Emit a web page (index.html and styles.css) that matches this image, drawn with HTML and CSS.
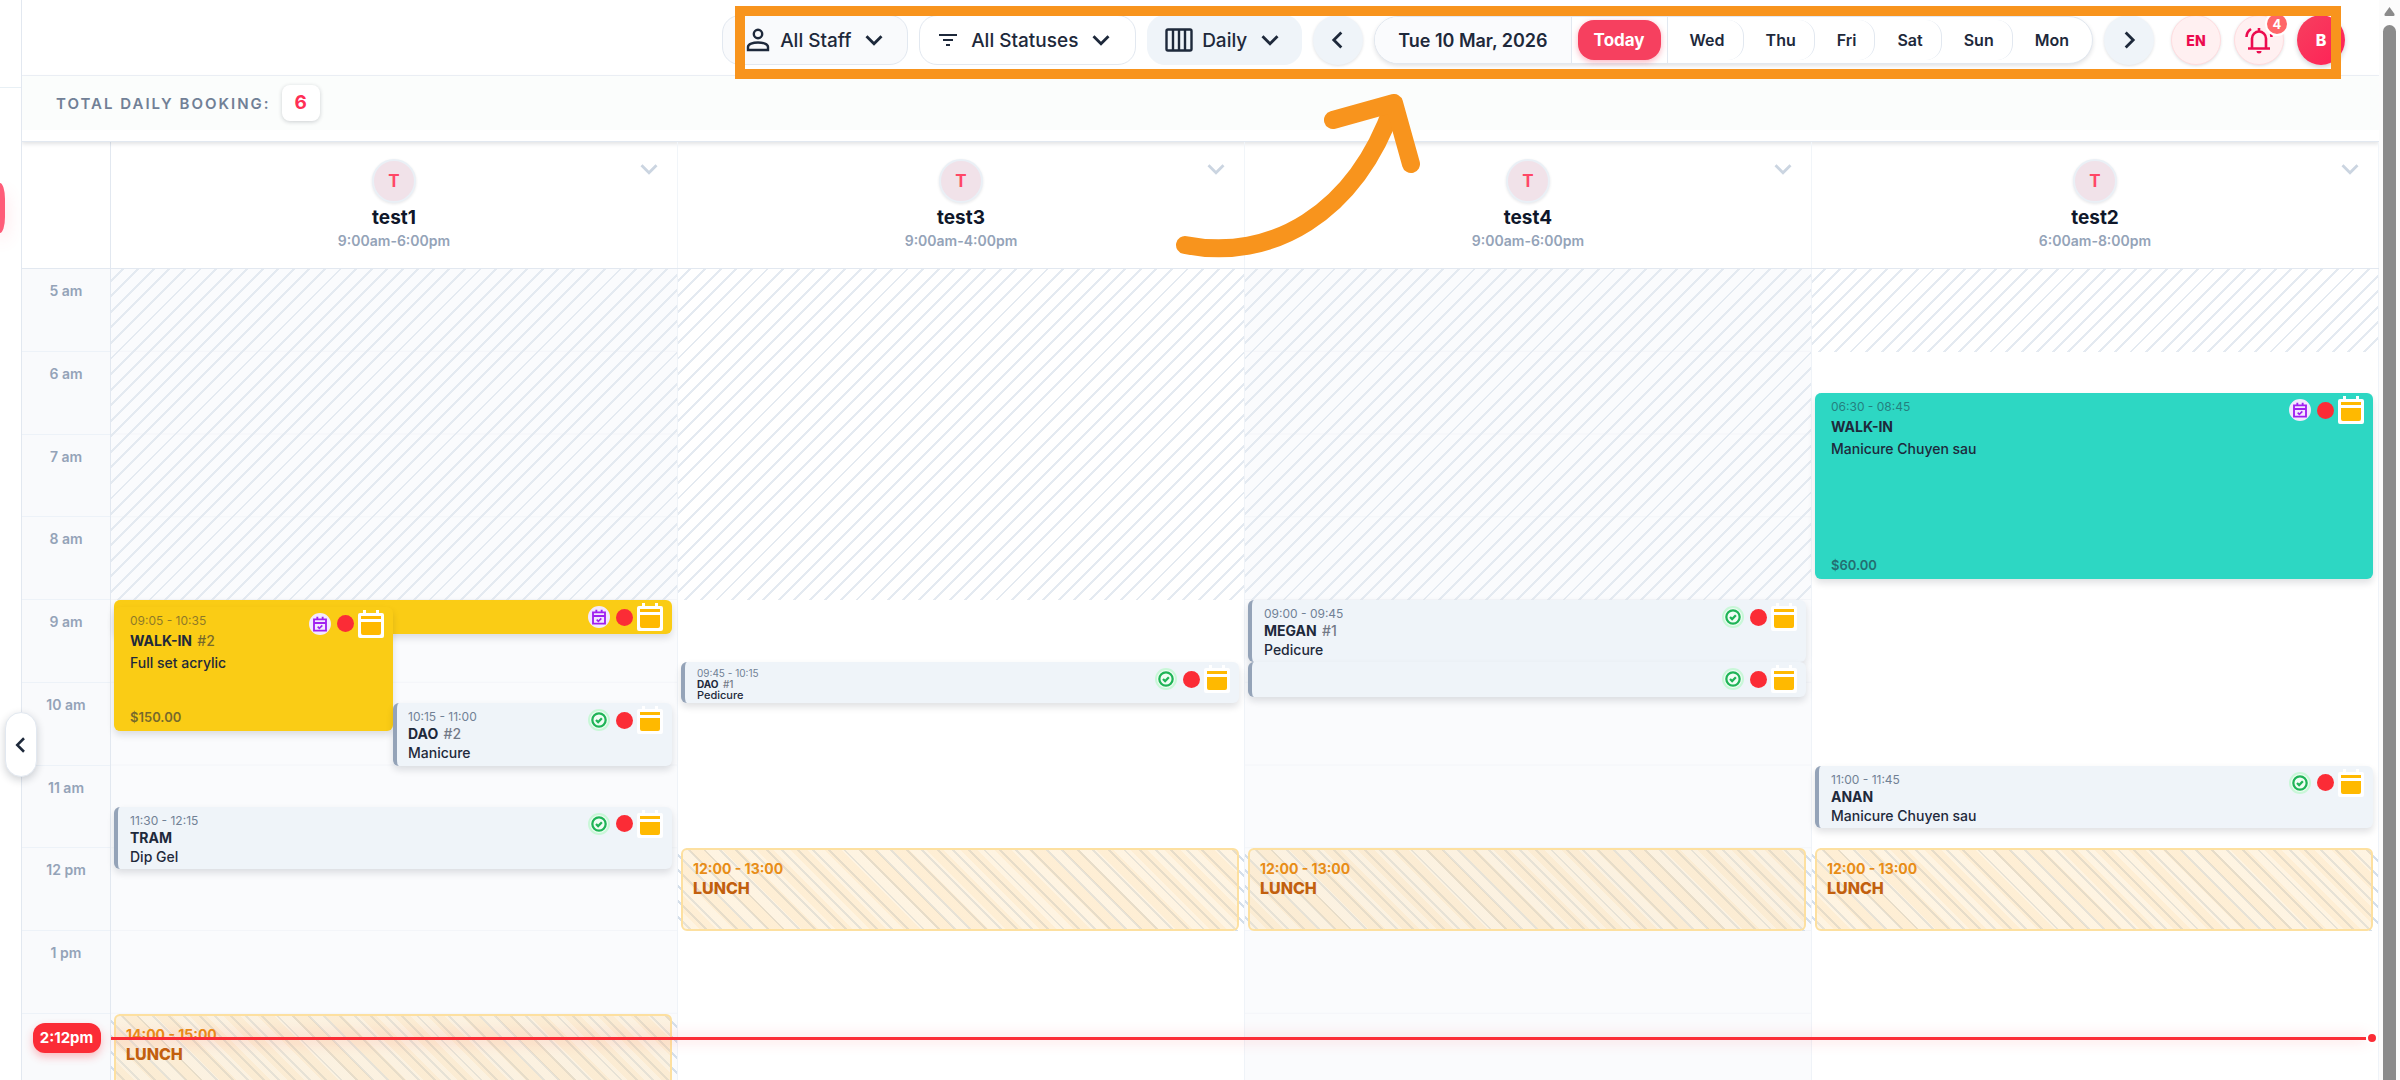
FILE: index.html
```html
<!DOCTYPE html>
<html lang="en">
<head>
  <meta charset="UTF-8" />
  <meta name="viewport" content="width=device-width, initial-scale=1.0" />
  <title>Daily Bookings</title>
  <link rel="stylesheet" href="styles.css">
</head>
<body>

  <!-- Shared icons -->
  <svg class="sprite" aria-hidden="true">
    <symbol id="i-down" viewBox="0 0 24 24"><path d="M3 7.500l9 9 9-9" fill="none" stroke="currentColor" stroke-width="3.400"/></symbol>
    <symbol id="i-left" viewBox="0 0 24 24"><path d="M16 3l-9 9 9 9" fill="none" stroke="currentColor" stroke-width="3.400"/></symbol>
    <symbol id="i-right" viewBox="0 0 24 24"><path d="M8 3l9 9-9 9" fill="none" stroke="currentColor" stroke-width="3.400"/></symbol>
    <symbol id="i-done" viewBox="0 0 24 24">
      <circle cx="12" cy="12" r="10" fill="none" stroke="currentColor" stroke-width="3.400"/>
      <path d="M7.500 12l3.200 3.200 5.600-5.800" fill="none" stroke="currentColor" stroke-width="3.400"/>
    </symbol>
    <symbol id="i-booked" viewBox="0 0 24 24">
      <path d="M3 5h18v17H3zM3 10.500h18M8 1v5M16 1v5" fill="none" stroke="currentColor" stroke-width="2.800"/>
      <path d="M8.500 16l2.500 2.500 4.500-4.500" fill="none" stroke="currentColor" stroke-width="2.400"/>
    </symbol>
    <symbol id="i-calendar" viewBox="0 0 26 28">
      <path d="M5 0h3v3h10V0h3v3h3a2 2 0 0 1 2 2v21a2 2 0 0 1-2 2H2a2 2 0 0 1-2-2V5a2 2 0 0 1 2-2h3z" fill="#fff"/>
      <path d="M3 6h20v3H3zM3 12h20v11a2 2 0 0 1-2 2H5a2 2 0 0 1-2-2z" fill="#ffb900"/>
    </symbol>
  </svg>

  <aside class="sidebar">
    <div class="sidebar-top"></div>
    <div class="sidebar-active"></div>
    <button class="collapse" aria-label="Collapse sidebar"><svg><use href="#i-left"/></svg></button>
  </aside>

  <main class="main">
    <header class="toolbar">
      <label class="picker picker-staff">
        <svg class="icon-user" viewBox="0 0 24 24" fill="none" stroke="currentColor" stroke-width="2.400"><circle cx="12" cy="6" r="4.200"/><path d="M2 22v-3c0-3 5-4.500 10-4.500s10 1.500 10 4.500v3z"/></svg>
        <select aria-label="Staff"><option>All Staff</option></select>
        <svg class="chev"><use href="#i-down"/></svg>
      </label>
      <label class="picker picker-status">
        <svg class="icon-filter" viewBox="0 0 18 14" stroke="currentColor" stroke-width="2"><path d="M0 2h18M4 7h10M7 12h4"/></svg>
        <select aria-label="Status"><option>All Statuses</option></select>
        <svg class="chev"><use href="#i-down"/></svg>
      </label>
      <label class="picker picker-view">
        <svg class="icon-cols" viewBox="0 0 28 24" fill="none" stroke="currentColor" stroke-width="2.400"><rect x="1.500" y="1.500" width="25" height="21" rx="1.500"/><path d="M8 2v20M14 2v20M20 2v20"/></svg>
        <select aria-label="View"><option>Daily</option></select>
        <svg class="chev"><use href="#i-down"/></svg>
      </label>
      <button class="round" aria-label="Previous day"><svg><use href="#i-left"/></svg></button>
      <div class="days">
        <button class="date">Tue 10 Mar, 2026</button>
        <div class="today-cell"><button class="today">Today</button></div>
        <button class="day">Wed</button>
        <button class="day">Thu</button>
        <button class="day">Fri</button>
        <button class="day">Sat</button>
        <button class="day">Sun</button>
        <button class="day">Mon</button>
      </div>
      <button class="round" aria-label="Next day"><svg><use href="#i-right"/></svg></button>
      <div class="account">
        <button class="lang">EN</button>
        <button class="bell" aria-label="Notifications">
          <svg viewBox="0 0 28 28" fill="none" stroke="currentColor" stroke-width="2.600"><path d="M3 22.500h22M7 22V12.500a7 7 0 0 1 14 0V22M14 6V2"/><path d="M1.500 11c0-3 1.500-6 4.500-8M26.500 11c0-1-.2-2-.5-3"/><path d="M11.500 25h5a2.500 2.500 0 0 1-5 0z" fill="currentColor" stroke="none"/></svg>
          <span class="count">4</span>
        </button>
        <button class="avatar">B</button>
      </div>
    </header>

    <section class="summary">
      <div class="summary-row">
        <span class="summary-label">TOTAL DAILY BOOKING:</span>
        <span class="summary-count">6</span>
      </div>
    </section>

    <section class="staff-row">
      <div class="corner"></div>
      <div class="staff">
        <div class="initial">T</div><div class="name">test1</div><div class="hours">9:00am-6:00pm</div>
        <button class="staff-menu" aria-label="test1 options"><svg><use href="#i-down"/></svg></button>
      </div>
      <div class="staff">
        <div class="initial">T</div><div class="name">test3</div><div class="hours">9:00am-4:00pm</div>
        <button class="staff-menu" aria-label="test3 options"><svg><use href="#i-down"/></svg></button>
      </div>
      <div class="staff">
        <div class="initial">T</div><div class="name">test4</div><div class="hours">9:00am-6:00pm</div>
        <button class="staff-menu" aria-label="test4 options"><svg><use href="#i-down"/></svg></button>
      </div>
      <div class="staff">
        <div class="initial">T</div><div class="name">test2</div><div class="hours">6:00am-8:00pm</div>
        <button class="staff-menu" aria-label="test2 options"><svg><use href="#i-down"/></svg></button>
      </div>
    </section>

    <!-- Each column is a grid of 5 minute rows starting at 5 am -->
    <section class="calendar">
      <div class="times">
        <div>5 am</div><div>6 am</div><div>7 am</div><div>8 am</div><div>9 am</div><div>10 am</div>
        <div>11 am</div><div>12 pm</div><div>1 pm</div><div></div><div></div><div></div>
      </div>

      <div class="column">
        <div class="closed" style="grid-row: 1 / 49"></div>
        <article class="event yellow" style="grid-row: 49 / 54">
          <div class="status"><span class="badge booked"><svg><use href="#i-booked"/></svg></span><span class="dot"></span><svg class="cal"><use href="#i-calendar"/></svg></div>
        </article>
        <article class="event yellow left roomy" style="grid-row: 50 / 68">
          <div class="info"><div class="time">09:05 - 10:35</div><div class="client">WALK-IN <span>#2</span></div><div class="service">Full set acrylic</div><div class="price">$150.00</div></div>
          <div class="status"><span class="badge booked"><svg><use href="#i-booked"/></svg></span><span class="dot"></span><svg class="cal"><use href="#i-calendar"/></svg></div>
        </article>
        <article class="event right" style="grid-row: 64 / 73">
          <div class="info"><div class="time">10:15 - 11:00</div><div class="client">DAO <span>#2</span></div><div class="service">Manicure</div></div>
          <div class="status"><span class="badge"><svg><use href="#i-done"/></svg></span><span class="dot"></span><svg class="cal"><use href="#i-calendar"/></svg></div>
        </article>
        <article class="event" style="grid-row: 79 / 88">
          <div class="info"><div class="time">11:30 - 12:15</div><div class="client">TRAM</div><div class="service">Dip Gel</div></div>
          <div class="status"><span class="badge"><svg><use href="#i-done"/></svg></span><span class="dot"></span><svg class="cal"><use href="#i-calendar"/></svg></div>
        </article>
        <div class="break" style="grid-row: 109 / 121"></div>
        <article class="lunch" style="grid-row: 109 / 121"><div class="lunch-time">14:00 - 15:00</div><div class="lunch-name">LUNCH</div></article>
      </div>

      <div class="column">
        <div class="closed" style="grid-row: 1 / 49"></div>
        <article class="event tiny" style="grid-row: 58 / 64">
          <div class="info"><div class="time">09:45 - 10:15</div><div class="client">DAO <span>#1</span></div><div class="service">Pedicure</div></div>
          <div class="status"><span class="badge"><svg><use href="#i-done"/></svg></span><span class="dot"></span><svg class="cal"><use href="#i-calendar"/></svg></div>
        </article>
        <div class="break" style="grid-row: 85 / 97"></div>
        <article class="lunch" style="grid-row: 85 / 97"><div class="lunch-time">12:00 - 13:00</div><div class="lunch-name">LUNCH</div></article>
      </div>

      <div class="column">
        <div class="closed" style="grid-row: 1 / 49"></div>
        <article class="event" style="grid-row: 49 / 58">
          <div class="info"><div class="time">09:00 - 09:45</div><div class="client">MEGAN <span>#1</span></div><div class="service">Pedicure</div></div>
          <div class="status"><span class="badge"><svg><use href="#i-done"/></svg></span><span class="dot"></span><svg class="cal"><use href="#i-calendar"/></svg></div>
        </article>
        <article class="event" style="grid-row: 58 / 63">
          <div class="status"><span class="badge"><svg><use href="#i-done"/></svg></span><span class="dot"></span><svg class="cal"><use href="#i-calendar"/></svg></div>
        </article>
        <div class="break" style="grid-row: 85 / 97"></div>
        <article class="lunch" style="grid-row: 85 / 97"><div class="lunch-time">12:00 - 13:00</div><div class="lunch-name">LUNCH</div></article>
      </div>

      <div class="column">
        <div class="closed" style="grid-row: 1 / 13"></div>
        <article class="event teal roomy" style="grid-row: 19 / 46">
          <div class="info"><div class="time">06:30 - 08:45</div><div class="client">WALK-IN</div><div class="service">Manicure Chuyen sau</div><div class="price">$60.00</div></div>
          <div class="status"><span class="badge booked"><svg><use href="#i-booked"/></svg></span><span class="dot"></span><svg class="cal"><use href="#i-calendar"/></svg></div>
        </article>
        <article class="event" style="grid-row: 73 / 82">
          <div class="info"><div class="time">11:00 - 11:45</div><div class="client">ANAN</div><div class="service">Manicure Chuyen sau</div></div>
          <div class="status"><span class="badge"><svg><use href="#i-done"/></svg></span><span class="dot"></span><svg class="cal"><use href="#i-calendar"/></svg></div>
        </article>
        <div class="break" style="grid-row: 85 / 97"></div>
        <article class="lunch" style="grid-row: 85 / 97"><div class="lunch-time">12:00 - 13:00</div><div class="lunch-name">LUNCH</div></article>
      </div>

      <!-- Current time marker -->
      <div class="now">
        <div class="now-cell"><span class="now-label">2:12pm</span></div>
        <div class="now-line"></div>
        <div class="now-dot"></div>
      </div>
    </section>
  </main>

  <div class="scrollbar">
    <svg viewBox="0 0 12 9"><path d="M6 0l5 7q.500 2-1 2H2Q.500 9 1 7z" fill="currentColor"/></svg>
    <div class="thumb"></div>
  </div>

  <!-- Tutorial highlight -->
  <div class="highlight"></div>
  <svg class="arrow" viewBox="0 0 250 170" fill="none" stroke="currentColor" stroke-width="18" stroke-linecap="round" stroke-linejoin="round">
    <path d="M10 151C96 168 180 120 218 12"/>
    <path d="M158 26L219 9L236 70"/>
  </svg>

</body>
</html>
```
FILE: styles.css
```css
:root {
  --accent: #f6405f;
  --red: #fb2c36;
  --ink: #1e293b;
  --muted: #94a3b8;
  --line: #e2e8f0;
  --soft: #eff4f9;
  --mark: #f8941d;
}

* {
  margin: 0;
  padding: 0;
  box-sizing: border-box;
}

body {
  position: relative;
  display: flex;
  height: 100vh;
  overflow: hidden;
  background: #fff;
  color: var(--ink);
  font-family: Inter, "Liberation Sans", sans-serif;
}

button, select {
  border: none;
  background: none;
  color: inherit;
  font: inherit;
  cursor: pointer;
}

.sprite {
  position: absolute;
  width: 0;
  height: 0;
}

/* === SIDEBAR === */
.sidebar {
  position: relative;
  flex: none;
  width: 22px;
  border-right: 1px solid var(--line);
  z-index: 5;
}

.sidebar-top {
  height: 88px;
  border-bottom: 1px solid #e8f0f5;
}

.sidebar-active {
  width: 5px;
  height: 50px;
  margin-top: 95px;
  border-radius: 0 5px 5px 0 / 0 16px 16px 0;
  background: #ff5c78;
  box-shadow: 0 8px 16px rgba(255, 92, 120, 0.3);
}

.collapse {
  position: absolute;
  top: 712px;
  left: 5px;
  width: 32px;
  height: 65px;
  border-radius: 16px;
  background: #fff;
  border: 1px solid var(--line);
  box-shadow: 0 3px 8px rgba(15, 23, 42, 0.2);
}

.collapse svg {
  display: block;
  width: 18px;
  height: 18px;
  margin: auto;
}

.main {
  flex: 1;
  min-width: 0;
  overflow: hidden;
}

/* === TOOLBAR === */
.toolbar {
  display: flex;
  align-items: center;
  justify-content: flex-end;
  gap: 11px;
  height: 76px;
  padding: 5px 34px 0 0;
  border-bottom: 1px solid #edf1f7;
  font-size: 19px;
  font-weight: 500;
}

.picker {
  display: flex;
  align-items: center;
  height: 50px;
  border: 1px solid var(--line);
  border-radius: 18px;
}

.picker select {
  appearance: none;
}

.picker-staff {
  padding: 0 23px;
  background: #f9fafc;
}

.picker-status {
  padding: 0 24px 0 19px;
}

.picker-view {
  padding: 0 21px 0 17px;
  border-color: var(--soft);
  background: var(--soft);
}

.icon-user {
  width: 24px;
  height: 26px;
  margin-right: 10px;
}

.icon-filter {
  width: 18px;
  height: 14px;
  margin-right: 14px;
}

.icon-cols {
  width: 28px;
  height: 24px;
  margin-right: 9px;
}

.chev {
  width: 20px;
  height: 20px;
  margin-left: 12px;
}

.round {
  width: 50px;
  height: 50px;
  border-radius: 50%;
  background: var(--soft);
  box-shadow: 0 1px 3px rgba(15, 23, 42, 0.12);
}

.round svg {
  display: block;
  width: 20px;
  height: 20px;
  margin: auto;
}

.days {
  display: flex;
  align-items: center;
  height: 48px;
  border: 1px solid var(--line);
  border-radius: 24px;
  background: #fff;
  box-shadow: 0 2px 4px rgba(15, 23, 42, 0.12);
  font-size: 16px;
  font-weight: 600;
}

.date {
  height: 100%;
  padding: 0 23px;
  border-radius: 24px 0 0 24px;
  background: #fafbfd;
  font-size: 18px;
}

.today-cell {
  display: flex;
  align-items: center;
  height: 100%;
  padding: 0 6px;
  border: solid var(--line);
  border-width: 0 1px;
}

.today {
  height: 40px;
  padding: 0 16px;
  border-radius: 16px;
  background: var(--accent);
  box-shadow: 0 2px 6px rgba(246, 64, 95, 0.4);
  color: #fff;
  font-size: 17px;
  font-weight: 700;
}

.day {
  height: 40px;
  padding: 0 18px 0 22px;
  border-right: 1px solid var(--line);
  border-radius: 16px;
}

.day:last-child {
  padding-right: 23px;
  border-right: none;
}

.account {
  display: flex;
  align-items: center;
  gap: 13px;
  margin-left: 6px;
}

.lang, .bell {
  width: 50px;
  height: 50px;
  border: 1px solid #ffdde0;
  border-radius: 50%;
  background: #fff0f1;
  box-shadow: 0 1px 3px rgba(15, 23, 42, 0.12);
  color: #ec0b4f;
}

.lang {
  font-size: 14px;
  font-weight: 800;
}

.bell {
  position: relative;
}

.bell svg {
  display: block;
  width: 28px;
  height: 28px;
  margin: auto;
}

.count {
  position: absolute;
  top: -4px;
  right: -6px;
  width: 24px;
  height: 24px;
  border: 2px solid #fff;
  border-radius: 50%;
  background: #ff6768;
  color: #fff;
  font-size: 13px;
  font-weight: 700;
  line-height: 20px;
}

.avatar {
  width: 48px;
  height: 50px;
  border-radius: 50%;
  background: linear-gradient(135deg, #f6405f, #ff2056);
  box-shadow: 0 2px 5px rgba(15, 23, 42, 0.2);
  color: #fff;
  font-size: 16px;
  font-weight: 800;
}

/* === SUMMARY === */
.summary {
  position: relative;
  padding-bottom: 11px;
  border-bottom: 1px solid var(--line);
  box-shadow: 0 2px 4px rgba(15, 23, 42, 0.12);
}

.summary-row {
  display: flex;
  align-items: center;
  gap: 11px;
  height: 54px;
  padding-left: 34px;
  background: #fbfdfc;
}

.summary-label {
  color: #718096;
  font-size: 15px;
  font-weight: 600;
  letter-spacing: 2px;
}

.summary-count {
  width: 38px;
  height: 36px;
  border-radius: 8px;
  background: #fff;
  box-shadow: 0 1px 4px rgba(15, 23, 42, 0.2);
  color: #ff2f55;
  font-size: 19px;
  font-weight: 700;
  line-height: 36px;
  text-align: center;
}

/* === STAFF HEADER === */
.staff-row, .calendar {
  display: grid;
  grid-template-columns: 89px repeat(4, minmax(0, 1fr));
  grid-template-rows: minmax(0, 1fr);
}

.staff-row {
  height: 127px;
  border-bottom: 1px solid var(--line);
}

.corner {
  border-right: 1px solid var(--line);
}

.staff {
  position: relative;
  display: flex;
  flex-direction: column;
  align-items: center;
  padding-top: 17px;
  border-right: 1px solid #f1f5f9;
}

.initial {
  width: 44px;
  height: 44px;
  border: 2px solid #eaf0f6;
  border-radius: 50%;
  background: #f1e2e9;
  box-shadow: 0 1px 3px rgba(15, 23, 42, 0.1);
  color: #ff4766;
  font-size: 17px;
  font-weight: 700;
  line-height: 40px;
  text-align: center;
}

.name {
  margin-top: 2px;
  color: #0f172a;
  font-size: 19px;
  font-weight: 700;
  line-height: 26px;
}

.hours {
  color: var(--muted);
  font-size: 14px;
  font-weight: 600;
  line-height: 20px;
}

.staff-menu {
  position: absolute;
  top: 17px;
  right: 18px;
  color: #cbd5e1;
}

.staff-menu svg {
  display: block;
  width: 20px;
  height: 20px;
}

/* === CALENDAR === */
.calendar {
  position: relative;
  height: 993px;
}

.times {
  display: grid;
  grid-template-rows: repeat(12, minmax(0, 1fr));
  border-right: 1px solid var(--line);
  background: #f9fafc;
}

.times div {
  padding-top: 12px;
  border-bottom: 1px solid #edf2f8;
  color: var(--muted);
  font-size: 14px;
  font-weight: 600;
  line-height: 20px;
  text-align: center;
}

.column {
  display: grid;
  grid-template-columns: repeat(2, minmax(0, 1fr));
  grid-template-rows: repeat(144, minmax(0, 1fr));
  padding: 0 5px 0 3px;
  border-right: 1px solid #eff3f8;
}

.column:nth-child(even) {
  background: linear-gradient(transparent calc(100% - 1px), #f3f5f9 0) 0 0 / 100% calc(100% / 12) #fafbfd;
}

.closed, .break {
  grid-column: 1 / -1;
  margin: 0 -5px 0 -3px;
}

.closed {
  background: repeating-linear-gradient(-45deg, transparent 0 9px, #e4eaf1 9px 11px);
}

.break {
  background: repeating-linear-gradient(45deg, transparent 0 9px, #d5dfea 9px 11px);
}

.lunch, .event {
  grid-column: 1 / -1;
}

.lunch {
  padding: 9px 10px;
  border: 2px solid #fde0a0;
  border-radius: 6px;
  background: repeating-linear-gradient(45deg, rgba(253, 230, 190, 0.45) 0 12px, rgba(253, 218, 161, 0.45) 12px 24px);
}

.lunch-time {
  color: #e88d17;
  font-size: 14px;
  font-weight: 700;
  line-height: 20px;
}

.lunch-name {
  color: #c2600e;
  font-size: 16px;
  font-weight: 800;
  line-height: 18px;
}

/* === EVENTS === */
.event {
  position: relative;
  display: flex;
  justify-content: space-between;
  padding: 6px 9px 4px 12px;
  border-left: 4px solid var(--muted);
  border-radius: 6px;
  background: var(--soft);
  box-shadow: 0 4px 7px rgba(15, 23, 42, 0.13);
}

.event.left {
  grid-column: 1;
}

.event.right {
  grid-column: 2;
  padding-left: 11px;
}

.event.yellow {
  border-left-color: #facc15;
  background: #facc15;
}

.event.teal {
  border-left-color: #2dd7c3;
  background: #2dd7c3;
}

.info {
  display: flex;
  flex-direction: column;
  overflow: hidden;
  white-space: nowrap;
}

.time {
  flex: none;
  color: #64748b;
  font-size: 12px;
  line-height: 16px;
  opacity: 0.9;
}

.client {
  flex: none;
  font-size: 14px;
  font-weight: 700;
  line-height: 18px;
}

.client span {
  margin-left: 2px;
  font-weight: 500;
  opacity: 0.6;
}

.service {
  flex: none;
  font-size: 14px;
  font-weight: 500;
  line-height: 20px;
}

.price {
  margin-top: auto;
  font-size: 13px;
  font-weight: 600;
  line-height: 16px;
  opacity: 0.6;
}

.roomy {
  padding-bottom: 6px;
}

.roomy .info {
  gap: 2px;
}

.roomy .client {
  line-height: 20px;
}

.roomy .time {
  color: var(--ink);
  opacity: 0.5;
}

/* Half hour bookings squeeze three lines into one slot */
.event.tiny {
  padding-bottom: 3px;
}

.tiny .time, .tiny .client {
  height: 9px;
  margin-bottom: 2px;
  overflow: hidden;
  font-size: 10px;
  line-height: 11px;
}

.tiny .service {
  font-size: 11px;
  line-height: 10px;
}

.status {
  display: flex;
  flex: none;
  align-items: center;
  align-self: flex-start;
  gap: 4px;
  height: 28px;
  margin: -3px 0 0 auto;
}

.badge {
  display: flex;
  align-items: center;
  justify-content: center;
  width: 22px;
  height: 22px;
  margin-right: 2px;
  border: 2px solid #c9f7d8;
  border-radius: 50%;
  background: #f0fdf4;
  color: #1fb457;
}

.badge svg {
  width: 16px;
  height: 16px;
}

.badge.booked {
  border-color: #f3e8ff;
  background: #f3e8ff;
  color: #a020f0;
}

.dot {
  width: 17px;
  height: 17px;
  border-radius: 50%;
  background: var(--red);
}

.cal {
  width: 26px;
  height: 28px;
}

/* === CURRENT TIME === */
.now {
  position: absolute;
  top: 754px;
  left: 0;
  right: 0;
  display: flex;
  align-items: center;
  height: 30px;
}

.now-cell {
  width: 89px;
  text-align: center;
}

.now-label {
  display: inline-block;
  width: 68px;
  height: 30px;
  border-radius: 12px;
  background: var(--red);
  box-shadow: 0 4px 8px rgba(251, 44, 54, 0.3);
  color: #fff;
  font-size: 15px;
  font-weight: 700;
  line-height: 30px;
}

.now-line {
  flex: 1;
  height: 3px;
  background: var(--red);
  box-shadow: 0 0 14px rgba(251, 44, 54, 0.35);
}

.now-dot {
  width: 12px;
  height: 12px;
  margin-right: 1px;
  border: 2px solid #fff;
  border-radius: 50%;
  background: var(--red);
}

/* === SCROLLBAR === */
.scrollbar {
  flex: none;
  width: 21px;
  padding: 7px 4px 0;
  background: #fcfcfc;
  color: #8b8b8b;
}

.scrollbar svg {
  display: block;
  width: 13px;
  height: 9px;
}

.thumb {
  height: 100%;
  margin-top: 9px;
  border-radius: 7px 7px 0 0;
  background: currentColor;
}

/* === HIGHLIGHT === */
.highlight {
  position: absolute;
  top: 6px;
  right: 59px;
  width: 1606px;
  height: 73px;
  border: 10px solid var(--mark);
  z-index: 10;
}

.arrow {
  position: absolute;
  top: 94px;
  right: 975px;
  width: 250px;
  height: 170px;
  color: var(--mark);
  z-index: 10;
}
```
